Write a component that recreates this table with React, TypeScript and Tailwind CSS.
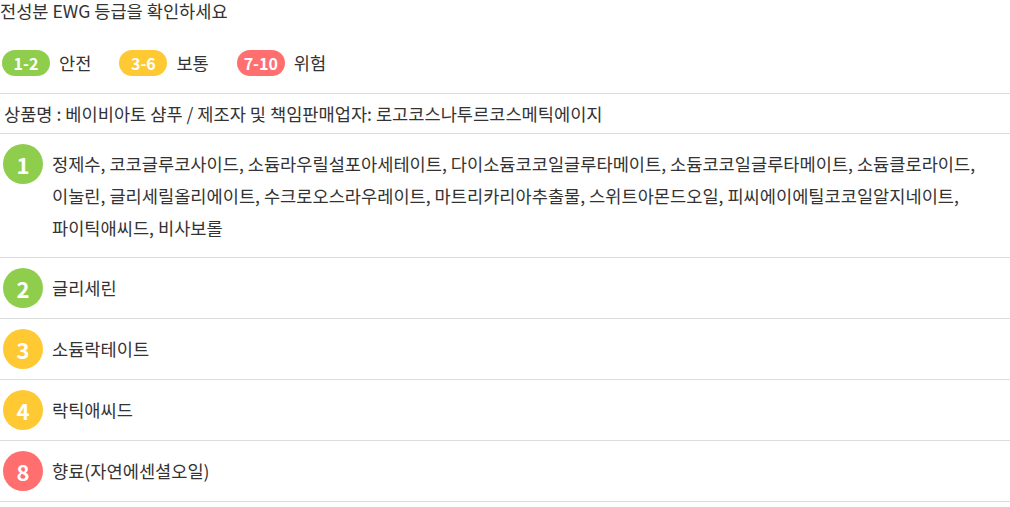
import React from 'react'

type Ingredient = {
  grade: number
  names: string
}

const ingredients: Ingredient[] = [
  {
    grade: 1,
    names:
      '정제수, 코코글루코사이드, 소듐라우릴설포아세테이트, 다이소듐코코일글루타메이트, 소듐코코일글루타메이트, 소듐클로라이드, 이눌린, 글리세릴올리에이트, 수크로오스라우레이트, 마트리카리아추출물, 스위트아몬드오일, 피씨에이에틸코코일알지네이트, 파이틱애씨드, 비사보롤',
  },
  { grade: 2, names: '글리세린' },
  { grade: 3, names: '소듐락테이트' },
  { grade: 4, names: '락틱애씨드' },
  { grade: 8, names: '향료(자연에센셜오일)' },
]

function gradeColor(grade: number) {
  if (grade <= 2) return 'bg-[#8fce4d]'
  if (grade <= 6) return 'bg-[#ffc933]'
  return 'bg-[#ff6f6f]'
}

const legend = [
  { range: '1-2', label: '안전', color: 'bg-[#8fce4d]' },
  { range: '3-6', label: '보통', color: 'bg-[#ffc933]' },
  { range: '7-10', label: '위험', color: 'bg-[#ff6f6f]' },
]

export default function App() {
  return (
    <div
      className="w-[1010px] bg-white text-[17.6px] text-[#333]"
      style={{ fontFamily: '"Noto Sans CJK KR", "Noto Sans", sans-serif' }}
    >
      <h2 className="leading-[22px] font-normal">전성분 EWG 등급을 확인하세요</h2>

      <div className="flex items-center gap-[28px] pt-[28px] pb-[17px] pl-[2px]">
        {legend.map((l) => (
          <div key={l.range} className="flex items-center gap-[9px]">
            <span
              className={`flex h-[26px] w-[48px] items-center justify-center rounded-full text-[16px] font-bold text-white ${l.color}`}
            >
              {l.range}
            </span>
            <span className="leading-[26px]">{l.label}</span>
          </div>
        ))}
      </div>

      <div className="border-t border-[#ddd]">
        <div className="border-b border-[#ddd] py-[7px] pl-[4px] leading-[25px]">
          상품명 : 베이비아토 샴푸 / 제조자 및 책임판매업자: 로고코스나투르코스메틱에이지
        </div>
        {ingredients.map((ing) => (
          <div
            key={ing.grade}
            className="flex items-start gap-[9px] border-b border-[#ddd] py-[10px] pl-[3px]"
          >
            <span
              className={`flex h-[40px] w-[40px] shrink-0 items-center justify-center rounded-full text-[22px] font-bold text-white ${gradeColor(ing.grade)}`}
            >
              {ing.grade}
            </span>
            <p
              className={
                ing.names.length > 40
                  ? 'break-keep pt-[4px] pb-[3px] pr-[30px] leading-[32px]'
                  : 'break-keep leading-[40px]'
              }
            >
              {ing.names}
            </p>
          </div>
        ))}
      </div>
    </div>
  )
}
